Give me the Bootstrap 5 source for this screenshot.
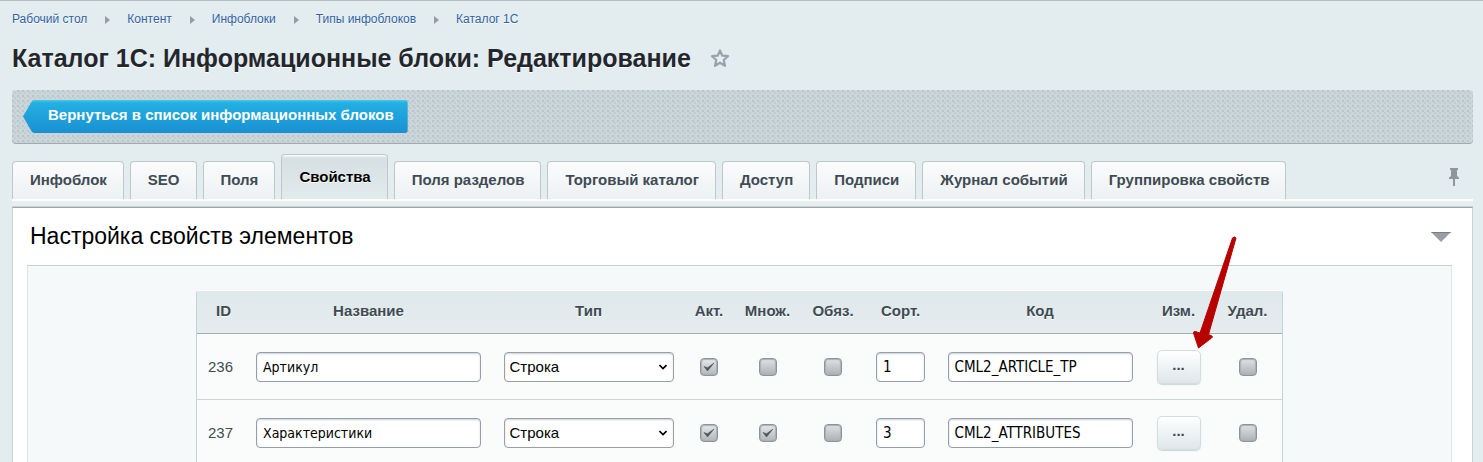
<!DOCTYPE html>
<html lang="ru">
<head>
<meta charset="utf-8">
<meta name="viewport" content="width=device-width, initial-scale=1">
<title>Каталог 1С: Информационные блоки: Редактирование</title>
<link rel="stylesheet" href="https://cdn.jsdelivr.net/npm/bootstrap@5.3.0/dist/css/bootstrap.min.css">
<script defer src="https://cdn.jsdelivr.net/npm/bootstrap@5.3.0/dist/js/bootstrap.bundle.min.js"></script>
<style>
body{font-family:"Liberation Sans",Arial,sans-serif;font-size:15px;line-height:20px;color:#3f4b54;background:#e3ecee;border-top:1px solid #b5bfc1}
.page{padding:0 10px 0 12px}
.crumbs{--bs-breadcrumb-divider:none;font-size:12px;line-height:16px;padding-top:10px}
.crumbs a{color:#2f62a6;text-decoration:none;text-shadow:0 1px #fff}
.crumbs .breadcrumb-item+.breadcrumb-item{padding-left:18px}
.crumbs .breadcrumb-item+.breadcrumb-item::before{content:"";float:none;display:inline-block;padding:0;margin-right:17px;border:solid transparent;border-width:4px 0 4px 5px;border-left-color:#959da3;vertical-align:-1px}
.heading{margin-top:15px;gap:19px}
.page-title{font-size:25px;line-height:32px;color:#23272d;text-shadow:0 1px #fff}
.fav{width:20px;height:20px}
.toolbar{height:54px;margin-top:16px;padding:10px 11px;border-radius:4px;border-bottom:1px solid #9dabb3;background-color:#cbd6db;background-image:radial-gradient(circle at 1px 1px,#b8c5ca 1px,transparent 1px),radial-gradient(circle at 3px 3px,#c0ccd1 1px,transparent 1px);background-size:5px 5px}
.back-link{height:33px;line-height:30px;padding:0 14px 3px 25px;border-radius:0 3px 3px 0;color:#fff;font-weight:bold;text-decoration:none;background:linear-gradient(#4cc6e8 0,#23b0e2 3px,#1990d2 100%);clip-path:polygon(0 50%,9px 1px,11px 0,100% 0,100% 100%,11px 100%,9px 32px)}
.tabs{margin-top:10px;gap:6px;height:45px}
.tabs .nav-link{height:38px;padding:0 16px 0 17px;line-height:35px;color:#3f4b54;font-weight:bold;border:1px solid #bdc8cb;border-bottom:0;border-radius:4px 4px 0 0;background:linear-gradient(#fbfcfc,#edf1f3)}
.tabs .nav-link.active{height:45px;line-height:44px;color:#000;background:linear-gradient(#fff 0,#d6e0e3 3px,#e1eaec 100%);text-shadow:0 1px #fff}
.strip{height:8px;background:#e8eff0;border-top:2px solid #fff;border-bottom:1px solid #c9d1d3}
.panel{flex:1 0 auto;background:#fff;border:1px solid #c8d2d5;border-top-color:#9fa5aa;border-bottom:0}
.panel-head{height:57px;padding:0 21px 0 17px}
.panel-title{font-size:23px;line-height:28px;padding-bottom:2px;color:#000}
.inner{margin:0 20px 0 14px;padding-top:24px;background:#f5f9fa;border:1px solid #c3cfd3;border-color:#c3cfd3 #dce5e8 transparent}
.props{width:1087px;table-layout:fixed;border-collapse:separate;border-spacing:0;border:1px solid #c5d2d3;border-top-color:#fff;border-radius:4px 4px 0 0}
.props th{height:43px;padding:0 0 2px;text-align:center;background:linear-gradient(#dfe8ea,#e4ecee);border-bottom:1px solid #a5aeb1;text-shadow:0 1px #fff}
.props td{height:66px;padding:0;text-align:center;vertical-align:middle;background:#fafcfc;border-bottom:1px solid #cbd5d6}
.props .c-id{width:47px;padding-left:6px}.c-name{width:249px}.c-type{width:191px}.c-act{width:50px}.c-mul{width:67px}.c-req{width:64px}.c-sort{width:71px}.c-code{width:208px}.c-edit{width:69px}
.field{display:block;height:30px;margin:auto;border:1px solid #959fab;border-radius:4px;background:#fff;box-shadow:inset 0 1px 2px #c9d0d4;color:#000;font-family:"DejaVu Sans Condensed","Noto Sans",sans-serif;font-size:14px;padding:1px 6px 0}
.f-name{width:225px}.f-type{width:170px}.f-sort{width:49px}.f-code{width:185px}
.f-sort,.f-code{font-size:15px}
.pick{font-family:"Liberation Sans",Arial,sans-serif;font-size:15px;padding:0 5px;appearance:none;border-color:#9b9fa2;background:#fff url("data:image/svg+xml,%3Csvg xmlns='http://www.w3.org/2000/svg' width='8' height='6'%3E%3Cpath d='M.5 1l3.500 3.500L7.500 1' fill='none' stroke='%23000' stroke-width='1.600'/%3E%3C/svg%3E") no-repeat right 6px center}
.tick{appearance:none;display:block;width:18px;height:18px;margin:auto;border:1px solid #8a949b;border-radius:4px;background:linear-gradient(#dfe1e3,#adb1b4);box-shadow:inset 0 0 1px 1px #a9b0b5}
.tick:checked{background:url("data:image/svg+xml,%3Csvg xmlns='http://www.w3.org/2000/svg' width='16' height='16'%3E%3Cpath d='M3 7.500l3.500 4.500L13 4 6.500 8.800z' fill='%234f565c' stroke='%234f565c' stroke-width='.6'/%3E%3C/svg%3E") center no-repeat,linear-gradient(#e6e8ea,#b2b6b9)}
.more{display:block;width:44px;height:34px;margin:auto;padding:0 0 3px;border:1px solid #d5dcdf;border-radius:5px;background:linear-gradient(#fff,#dde7ea);box-shadow:0 1px 1px #cdd5d8;color:#3f4b54;font-weight:bold}
.pin{padding:10px 13px 0 0}
.pointer{position:absolute;left:997px;top:-54px;width:46px;height:114px;pointer-events:none}
</style>
</head>
<body class="vh-100 overflow-hidden">
<div class="page h-100 d-flex flex-column">
  <nav aria-label="Навигация">
    <ol class="breadcrumb crumbs mb-0">
      <li class="breadcrumb-item"><a href="#">Рабочий стол</a></li>
      <li class="breadcrumb-item"><a href="#">Контент</a></li>
      <li class="breadcrumb-item"><a href="#">Инфоблоки</a></li>
      <li class="breadcrumb-item"><a href="#">Типы инфоблоков</a></li>
      <li class="breadcrumb-item"><a href="#">Каталог 1С</a></li>
    </ol>
  </nav>
  <div class="heading d-flex align-items-center">
    <h1 class="page-title fw-bold mb-0">Каталог 1С: Информационные блоки: Редактирование</h1>
    <a href="#" class="fav d-flex" aria-label="В избранное"><svg width="20" height="20" viewBox="0 0 20 20"><path d="M10 2.500l2.300 5.200 5.700.5-4.300 3.800 1.300 5.800-5-3.100-5 3.100 1.300-5.800L2 8.200l5.700-.5z" fill="#e8eef0" stroke="#98a1b0" stroke-width="2.200" stroke-linejoin="round"/></svg></a>
  </div>
  <div class="toolbar d-flex flex-shrink-0">
    <a href="#" class="back-link">Вернуться в список информационных блоков</a>
  </div>
  <div class="d-flex flex-shrink-0">
    <ul class="nav tabs flex-nowrap align-items-end flex-grow-1 text-nowrap">
      <li><a class="nav-link" href="#">Инфоблок</a></li>
      <li><a class="nav-link" href="#">SEO</a></li>
      <li><a class="nav-link" href="#">Поля</a></li>
      <li><a class="nav-link active" href="#" aria-current="page">Свойства</a></li>
      <li><a class="nav-link" href="#">Поля разделов</a></li>
      <li><a class="nav-link" href="#">Торговый каталог</a></li>
      <li><a class="nav-link" href="#">Доступ</a></li>
      <li><a class="nav-link" href="#">Подписи</a></li>
      <li><a class="nav-link" href="#">Журнал событий</a></li>
      <li><a class="nav-link" href="#">Группировка свойств</a></li>
    </ul>
    <button type="button" class="pin btn border-0 d-flex align-items-center" aria-label="Закрепить"><svg width="12" height="20" viewBox="0 0 12 20"><path d="M2 1h8v2H9v6l2 1.500V12H7v7H5v-7H1v-1.500L3 9V3H2z" fill="#8f979c"/></svg></button>
  </div>
  <div class="strip flex-shrink-0"></div>
  <main class="panel">
    <div class="panel-head d-flex align-items-center justify-content-between">
      <h2 class="panel-title fw-normal mb-0">Настройка свойств элементов</h2>
      <button type="button" class="btn border-0 p-0 d-flex" aria-label="Свернуть"><svg width="20" height="10" viewBox="0 0 20 10"><path d="M0 0h20L10 10z" fill="#989ea3"/><path d="M0 0h20l-1 1H1z" fill="#777e83"/></svg></button>
    </div>
    <div class="inner d-flex justify-content-center">
      <div class="position-relative">
        <table class="props">
          <thead><tr><th class="c-id">ID</th><th class="c-name">Название</th><th class="c-type">Тип</th><th class="c-act">Акт.</th><th class="c-mul">Множ.</th><th class="c-req">Обяз.</th><th class="c-sort">Сорт.</th><th class="c-code">Код</th><th class="c-edit">Изм.</th><th>Удал.</th></tr></thead>
          <tbody>
            <tr>
              <td>236</td>
              <td><input class="field f-name" type="text" value="Артикул" aria-label="Название"></td>
              <td><select class="field pick f-type" aria-label="Тип"><option>Строка</option></select></td>
              <td><input class="tick" type="checkbox" checked aria-label="Активно"></td>
              <td><input class="tick" type="checkbox" aria-label="Множественное"></td>
              <td><input class="tick" type="checkbox" aria-label="Обязательное"></td>
              <td><input class="field f-sort" type="text" value="1" aria-label="Сортировка"></td>
              <td><input class="field f-code" type="text" value="CML2_ARTICLE_TP" aria-label="Код"></td>
              <td><button type="button" class="more" aria-label="Изменить">...</button></td>
              <td><input class="tick" type="checkbox" aria-label="Удалить"></td>
            </tr>
            <tr>
              <td>237</td>
              <td><input class="field f-name" type="text" value="Характеристики" aria-label="Название"></td>
              <td><select class="field pick f-type" aria-label="Тип"><option>Строка</option></select></td>
              <td><input class="tick" type="checkbox" checked aria-label="Активно"></td>
              <td><input class="tick" type="checkbox" checked aria-label="Множественное"></td>
              <td><input class="tick" type="checkbox" aria-label="Обязательное"></td>
              <td><input class="field f-sort" type="text" value="3" aria-label="Сортировка"></td>
              <td><input class="field f-code" type="text" value="CML2_ATTRIBUTES" aria-label="Код"></td>
              <td><button type="button" class="more" aria-label="Изменить">...</button></td>
              <td><input class="tick" type="checkbox" aria-label="Удалить"></td>
            </tr>
          </tbody>
        </table>
        <svg class="pointer" viewBox="0 0 46 114"><path d="M39.500 2q2-2 3.500 0L15.500 98.500l3.500 1.500q1 1-.5 2L5.500 112 .5 97q0-2 2-1.500l4.500 1.500z" fill="#b80000" stroke="#b80000"/></svg>
      </div>
    </div>
  </main>
</div>
</body>
</html>
